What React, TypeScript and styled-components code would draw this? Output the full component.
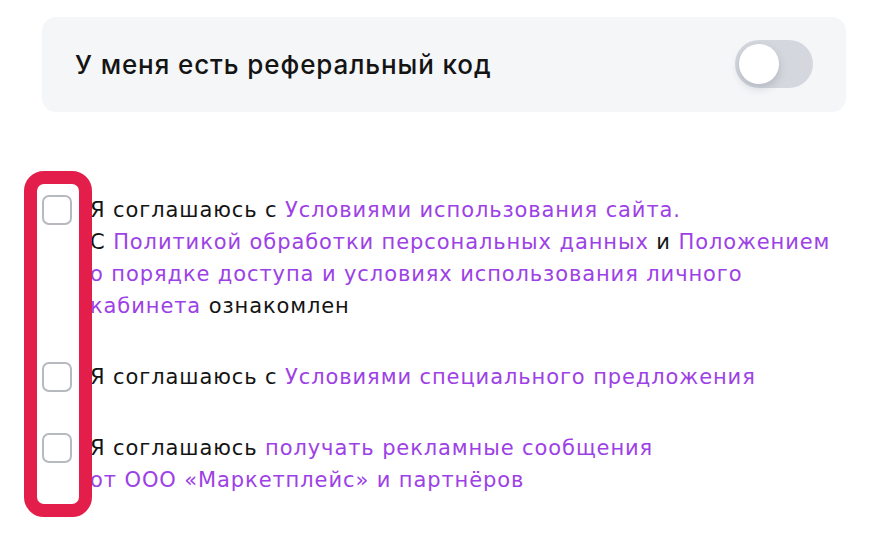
import React, { useState } from 'react';
import styled, { createGlobalStyle } from 'styled-components';

const GlobalStyle = createGlobalStyle`
  html, body {
    margin: 0;
    padding: 0;
    background: #ffffff;
  }
  body {
    font-family: Inter, "Noto Sans", "Liberation Sans", sans-serif;
    color: #141414;
  }
`;

const Page = styled.div`
  width: 882px;
  height: 551px;
  box-sizing: border-box;
  padding: 17px 36px 0 42px;
  position: relative;
`;

const ReferralCard = styled.div`
  height: 95px;
  box-sizing: border-box;
  padding: 0 33px;
  background: #f5f6f8;
  border-radius: 14px;
  display: flex;
  align-items: center;
  justify-content: space-between;
`;

const CardTitle = styled.span`
  font-family: Inter, "Liberation Sans", sans-serif;
  font-size: 26px;
  font-weight: 500;
  letter-spacing: 0.9px;
  color: #141414;
`;

const Toggle = styled.button<{ $on: boolean }>`
  width: 78px;
  height: 48px;
  border: none;
  padding: 4px;
  border-radius: 24px;
  background: ${p => (p.$on ? '#9d41e6' : '#d4d8de')};
  display: flex;
  justify-content: ${p => (p.$on ? 'flex-end' : 'flex-start')};
  cursor: pointer;
  margin-top: -2px;
`;

const Knob = styled.span`
  width: 40px;
  height: 40px;
  border-radius: 50%;
  background: #ffffff;
  box-shadow: 0 4px 10px rgba(30, 40, 60, 0.18);
`;

const Agreements = styled.div`
  margin-top: 82px;
  display: flex;
  flex-direction: column;
  gap: 39px;
`;

const AgreeRow = styled.label`
  display: flex;
  align-items: flex-start;
  gap: 18px;
  cursor: pointer;
`;

const Box = styled.span<{ $checked: boolean }>`
  flex: none;
  width: 30px;
  height: 30px;
  box-sizing: border-box;
  border: 2px solid #b6babf;
  border-radius: 7px;
  margin-top: 1px;
  background: ${p => (p.$checked ? '#9d41e6' : '#ffffff')};
`;

const AgreeText = styled.p`
  margin: 0;
  font-family: "DejaVu Sans", "Liberation Sans", sans-serif;
  font-size: 21px;
  line-height: 32px;
  letter-spacing: 0.9px;
  color: #141414;
  white-space: nowrap;
`;

const Link = styled.a`
  color: #9d41e6;
  text-decoration: none;
`;

const Highlight = styled.div`
  position: absolute;
  left: 24px;
  top: 171px;
  width: 68px;
  height: 346px;
  box-sizing: border-box;
  border: 13px solid #e31e4b;
  border-radius: 20px;
  pointer-events: none;
`;

export default function App() {
  const [referral, setReferral] = useState(false);
  const [checks, setChecks] = useState([false, false, false]);
  const flip = (i: number) => setChecks(c => c.map((v, j) => (j === i ? !v : v)));

  return (
    <Page>
      <GlobalStyle />
      <ReferralCard>
        <CardTitle>У меня есть реферальный код</CardTitle>
        <Toggle $on={referral} onClick={() => setReferral(!referral)}>
          <Knob />
        </Toggle>
      </ReferralCard>

      <Agreements>
        <AgreeRow onClick={() => flip(0)}>
          <Box $checked={checks[0]} />
          <AgreeText>
            Я соглашаюсь с <Link>Условиями использования сайта.</Link>
            <br />
            С <Link>Политикой обработки персональных данных</Link> и <Link>Положением</Link>
            <br />
            <Link>о порядке доступа и условиях использования личного</Link>
            <br />
            <Link>кабинета</Link> ознакомлен
          </AgreeText>
        </AgreeRow>

        <AgreeRow onClick={() => flip(1)}>
          <Box $checked={checks[1]} />
          <AgreeText>
            Я соглашаюсь с <Link>Условиями специального предложения</Link>
          </AgreeText>
        </AgreeRow>

        <AgreeRow onClick={() => flip(2)}>
          <Box $checked={checks[2]} />
          <AgreeText>
            Я соглашаюсь <Link>получать рекламные сообщения</Link>
            <br />
            <Link>от ООО «Маркетплейс» и партнёров</Link>
          </AgreeText>
        </AgreeRow>
      </Agreements>

      <Highlight />
    </Page>
  );
}
